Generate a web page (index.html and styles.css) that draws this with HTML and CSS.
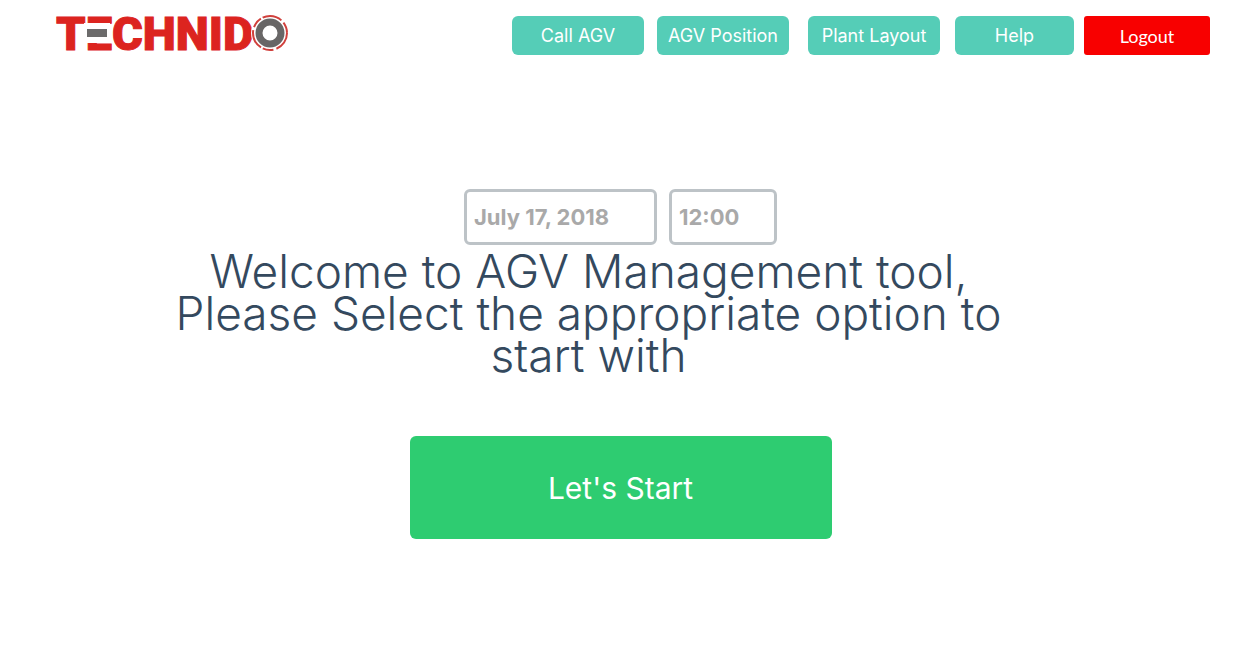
FILE: index.html
```html
<!DOCTYPE html>
<html lang="en">
<head>
<meta charset="utf-8">
<meta name="viewport" content="width=device-width, initial-scale=1">
<title>AGV Management</title>
<link rel="stylesheet" href="styles.css">
</head>
<body>
<header class="topbar">
  <a class="logo" href="#" aria-label="Technido">
    <svg class="logo-mark" width="236" height="40" viewBox="-2 0 236 40">
      <text class="logo-text" x="-1" y="36">TECHNID</text>
      <rect class="logo-gap" x="27" y="9" width="26" height="20"/>
      <rect class="logo-bar" x="30" y="15" width="20" height="8"/>
      <circle class="logo-disc" cx="213" cy="19" r="19"/>
      <circle class="logo-ring-outer" cx="213" cy="19" r="17"/>
      <circle class="logo-ring" cx="213" cy="19" r="11"/>
    </svg>
  </a>
  <nav class="nav">
    <button class="btn btn-nav" type="button">Call AGV</button>
    <button class="btn btn-nav" type="button">AGV Position</button>
    <button class="btn btn-nav btn-spaced" type="button">Plant Layout</button>
    <button class="btn btn-nav btn-help" type="button">Help</button>
    <button class="btn btn-logout" type="button">Logout</button>
  </nav>
</header>
<main class="hero">
  <form class="stamp">
    <input class="field field-date" type="text" aria-label="Date" value="July 17, 2018">
    <input class="field field-time" type="text" aria-label="Time" value="12:00">
  </form>
  <h1 class="title">Welcome to AGV Management tool,<br>Please Select the appropriate option to start with</h1>
  <button class="btn btn-start" type="button">Let's Start</button>
</main>
</body>
</html>
```
FILE: styles.css
```css
* {
  box-sizing: border-box;
}

body {
  margin: 0;
  background: #fff;
  color: #34495e;
  font-family: Inter, "Open Sans", sans-serif;
}

.topbar {
  display: flex;
  justify-content: space-between;
  align-items: flex-start;
  padding: 14px 26px 0 55px;
}

.logo-mark {
  display: block;
  overflow: visible;
}

.logo-text {
  fill: #dc241f;
  stroke: #dc241f;
  stroke-width: 1;
  font-family: Roboto, sans-serif;
  font-size: 47px;
  font-weight: 900;
}

.logo-gap,
.logo-disc {
  fill: #fff;
}

.logo-bar {
  fill: #6c6b6b;
}

.logo-ring-outer {
  fill: none;
  stroke: #d0403c;
  stroke-width: 2;
  stroke-dasharray: 20 3 11 2;
}

.logo-ring {
  fill: #fff;
  stroke: #686666;
  stroke-width: 7;
}

.nav {
  display: flex;
  padding-top: 2px;
}

.btn {
  border: 0;
  padding: 0;
  border-radius: 6px;
  color: #fff;
  font-family: inherit;
  cursor: pointer;
}

.btn-nav {
  width: 132px;
  height: 39px;
  margin-left: 13px;
  background: #55cdb7;
  font-size: 18px;
}

.btn-spaced {
  margin-left: 19px;
}

.btn-help {
  width: 119px;
  margin-left: 15px;
}

.btn-logout {
  width: 126px;
  height: 39px;
  margin-left: 10px;
  border-radius: 3px;
  background: #f80000;
  font-family: Lato, sans-serif;
  font-size: 18px;
}

.hero {
  display: flex;
  flex-direction: column;
  align-items: center;
  padding: 134px 0 40px 5px;
}

.stamp {
  display: flex;
  gap: 12px;
}

.field {
  height: 56px;
  padding: 0 7px;
  border: 3px solid #bdc3c7;
  border-radius: 6px;
  background: #fff;
  color: #a9a9a9;
  font-family: inherit;
  font-size: 22px;
  font-weight: 700;
}

.field-date {
  width: 193px;
}

.field-time {
  width: 108px;
}

.title {
  width: 100%;
  max-width: 860px;
  margin: 5px 64px 60px 0;
  font-size: 46px;
  font-weight: 300;
  line-height: 42px;
  text-align: center;
}

.btn-start {
  width: 422px;
  height: 103px;
  background: #2ecc71;
  font-size: 30px;
}
```
